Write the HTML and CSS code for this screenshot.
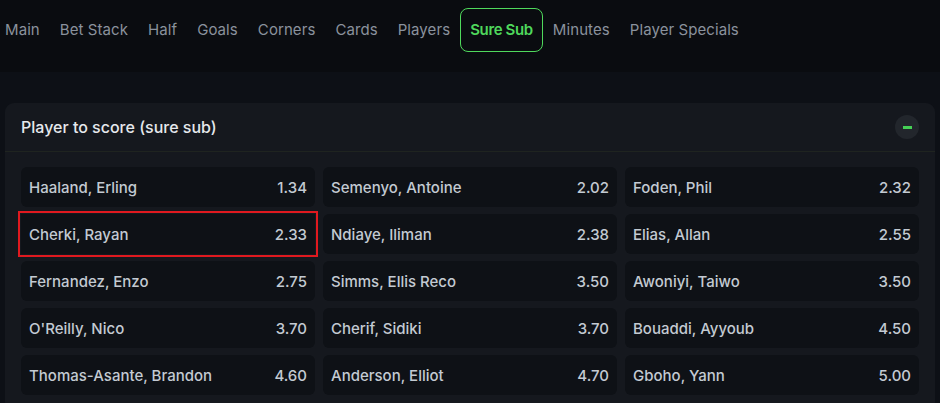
FILE: index.html
```html
<!DOCTYPE html>
<html>
<head>
<meta charset="utf-8">
<link rel="stylesheet" href="styles.css">
</head>
<body>
<div class="topbar">
  <nav class="tabs">
    <span class="tab">Main</span>
    <span class="tab">Bet Stack</span>
    <span class="tab">Half</span>
    <span class="tab">Goals</span>
    <span class="tab">Corners</span>
    <span class="tab">Cards</span>
    <span class="tab">Players</span>
    <span class="tab active">Sure Sub</span>
    <span class="tab">Minutes</span>
    <span class="tab">Player Specials</span>
  </nav>
</div>
<main class="content">
  <section class="panel">
    <header class="panel-head">
      <h2 class="panel-title">Player to score (sure sub)</h2>
      <button class="collapse" aria-label="collapse"><span class="bar"></span></button>
    </header>
    <div class="grid">
      <div class="cell"><span class="name">Haaland, Erling</span><span class="odds">1.34</span></div>
      <div class="cell"><span class="name">Semenyo, Antoine</span><span class="odds">2.02</span></div>
      <div class="cell"><span class="name">Foden, Phil</span><span class="odds">2.32</span></div>
      <div class="cell marked"><span class="name">Cherki, Rayan</span><span class="odds">2.33</span></div>
      <div class="cell"><span class="name">Ndiaye, Iliman</span><span class="odds">2.38</span></div>
      <div class="cell"><span class="name">Elias, Allan</span><span class="odds">2.55</span></div>
      <div class="cell"><span class="name">Fernandez, Enzo</span><span class="odds">2.75</span></div>
      <div class="cell"><span class="name">Simms, Ellis Reco</span><span class="odds">3.50</span></div>
      <div class="cell"><span class="name">Awoniyi, Taiwo</span><span class="odds">3.50</span></div>
      <div class="cell"><span class="name">O'Reilly, Nico</span><span class="odds">3.70</span></div>
      <div class="cell"><span class="name">Cherif, Sidiki</span><span class="odds">3.70</span></div>
      <div class="cell"><span class="name">Bouaddi, Ayyoub</span><span class="odds">4.50</span></div>
      <div class="cell"><span class="name">Thomas-Asante, Brandon</span><span class="odds">4.60</span></div>
      <div class="cell"><span class="name">Anderson, Elliot</span><span class="odds">4.70</span></div>
      <div class="cell"><span class="name">Gboho, Yann</span><span class="odds">5.00</span></div>
    </div>
  </section>
</main>
</body>
</html>
```
FILE: styles.css
```css
html, body {
  margin: 0;
  padding: 0;
  background: #0d1016;
  font-family: Inter, "Noto Sans", sans-serif;
  overflow: hidden;
}
.topbar {
  background: #0a0c10;
  height: 72px;
  padding-top: 8px;
  box-sizing: border-box;
}
.tabs {
  display: flex;
  margin-left: -5px;
}
.tab {
  display: block;
  padding: 11px 9px;
  line-height: 20px;
  font-size: 15px;
  letter-spacing: 0.08px;
  color: #8a929d;
  border: 1px solid transparent;
  border-radius: 8px;
  white-space: nowrap;
}
.tab.active {
  color: #4fd85c;
  font-weight: 600;
  letter-spacing: -0.35px;
  border-color: #4fd85c;
}
.content {
  padding: 31px 5px 0 5px;
}
.panel {
  background: #15181e;
  border-radius: 9px;
}
.panel-head {
  display: flex;
  align-items: center;
  justify-content: space-between;
  height: 48px;
  padding: 0 16px;
  border-bottom: 1px solid #1f2420;
}
.panel-title {
  margin: 0;
  font-size: 16px;
  font-weight: 500;
  color: #e6e9ed;
}
.collapse {
  width: 24px;
  height: 24px;
  border-radius: 50%;
  background: #22262c;
  border: none;
  padding: 0;
  display: flex;
  align-items: center;
  justify-content: center;
}
.collapse .bar {
  width: 9px;
  height: 3px;
  background: #45d055;
}
.grid {
  display: grid;
  grid-template-columns: repeat(3, 1fr);
  column-gap: 8px;
  row-gap: 7px;
  padding: 15px 16px 16px 16px;
}
.cell {
  display: flex;
  align-items: center;
  justify-content: space-between;
  height: 40px;
  padding: 0 8px;
  background: #0e1116;
  border-radius: 6px;
  font-size: 15px;
  font-weight: 500;
  color: #c3cad2;
}
.cell.marked {
  outline: 2px solid #e0191f;
  outline-offset: 1px;
  border-radius: 0;
}
```
